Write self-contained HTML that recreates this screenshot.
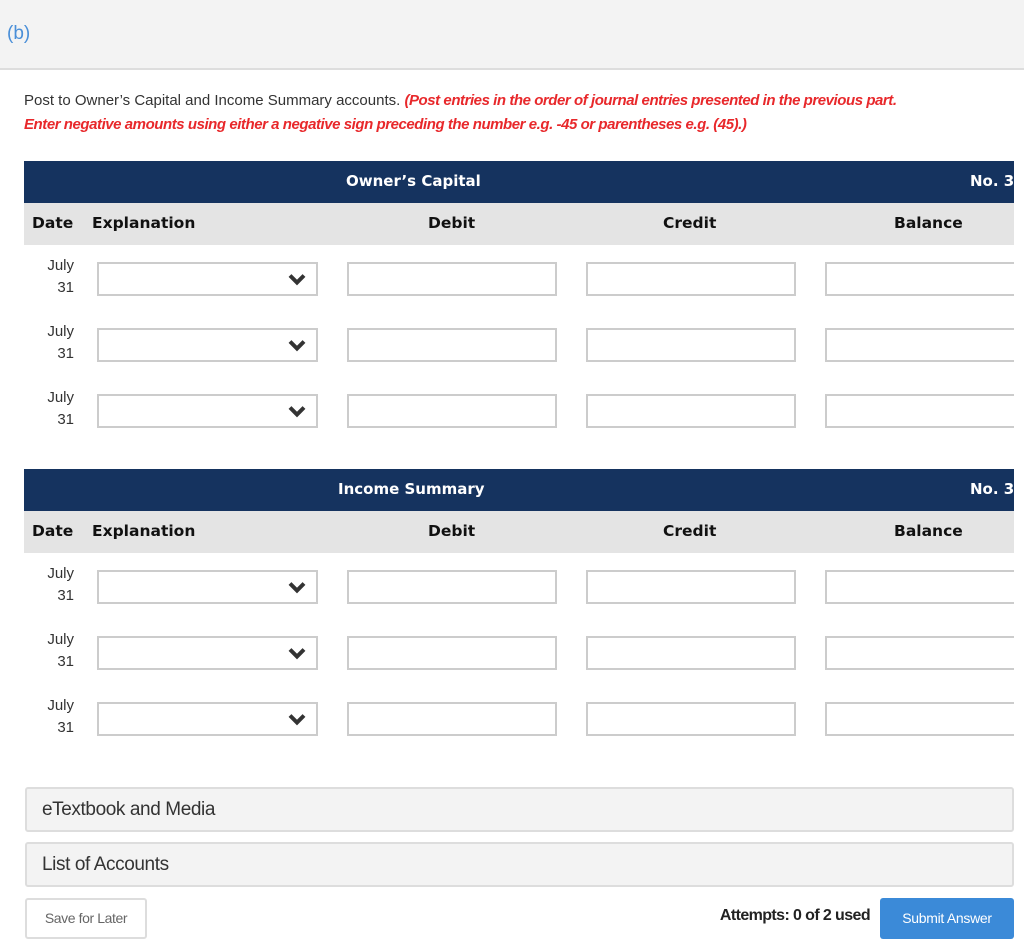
<!DOCTYPE html>
<html><head><style>
*{box-sizing:border-box;margin:0;padding:0}
body{width:1024px;height:944px;background:#fff;font-family:"Liberation Sans",sans-serif;position:relative;overflow:hidden;color:#333}
.top{position:absolute;left:0;top:0;width:1024px;height:70px;background:#f3f3f3;border-bottom:2px solid #ddd}
.b{position:absolute;left:7px;top:23px;color:#4a8fd8;font-size:19px}
.ins{position:absolute;left:24px;top:89px;font-size:15px;line-height:24px;color:#333;width:1000px;white-space:nowrap}
.ins i{color:#e8282b;font-weight:bold;letter-spacing:-0.45px;font-size:15px}
.hd{position:absolute;left:24px;width:990px;height:42px;background:#15335f;color:#fff;font-family:"DejaVu Sans",sans-serif;font-weight:bold;font-size:15px;overflow:hidden;white-space:nowrap}
.hd span{position:absolute;top:11px}
.ch{position:absolute;left:24px;width:990px;height:42px;background:#e4e4e4;font-family:"DejaVu Sans",sans-serif;font-weight:bold;font-size:15.5px;color:#111}
.ch span{position:absolute;top:11px}
.dt{position:absolute;left:24px;width:50px;text-align:right;font-size:15px;line-height:22px;color:#333}
.in{position:absolute;height:34px;border:2px solid #ccc;background:#fff}
.sel svg{position:absolute;right:10px;top:9px}
.box{position:absolute;left:25px;width:989px;height:45px;background:#f3f3f3;border:2px solid #ddd;border-radius:3px;font-size:19px;color:#333;padding:10px 0 0 15px;letter-spacing:-0.4px}
.save{position:absolute;left:25px;top:898px;width:122px;height:41px;border:2px solid #ddd;border-radius:3px;font-size:14px;color:#666;text-align:center;line-height:37px;letter-spacing:-0.4px}
.att{position:absolute;right:154px;top:907px;font-size:16px;color:#222;font-weight:bold;letter-spacing:-0.6px}
.sub{position:absolute;left:880px;top:898px;width:134px;height:41px;background:#3b8ad8;border-radius:3px;color:#fff;font-size:14px;text-align:center;line-height:41px;letter-spacing:-0.3px}
</style></head><body>
<div class="top"><div class="b">(b)</div></div>
<div class="ins">Post to Owner’s Capital and Income Summary accounts. <i>(Post entries in the order of journal entries presented in the previous part.</i><br><i>Enter negative amounts using either a negative sign preceding the number e.g. -45 or parentheses e.g. (45).)</i></div>

<div class="hd" style="top:161px"><span style="left:322px">Owner’s Capital</span><span style="left:946px">No. 3</span></div>
<div class="ch" style="top:203px"><span style="left:8px">Date</span><span style="left:68px">Explanation</span><span style="left:404px">Debit</span><span style="left:639px">Credit</span><span style="left:870px">Balance</span></div>

<div class="hd" style="top:469px"><span style="left:314px">Income Summary</span><span style="left:946px">No. 3</span></div>
<div class="ch" style="top:511px"><span style="left:8px">Date</span><span style="left:68px">Explanation</span><span style="left:404px">Debit</span><span style="left:639px">Credit</span><span style="left:870px">Balance</span></div>

<div id="rows"></div>
<script>
var tops=[262,328,394,570,636,702],h='';
tops.forEach(function(t){
h+='<div class="dt" style="top:'+(t-7)+'px">July<br>31</div>';
h+='<div class="in sel" style="left:97px;top:'+t+'px;width:221px"><svg width="18" height="13" viewBox="0 0 18 13"><path d="M2 2.5 L9 9.5 L16 2.5" stroke="#333" stroke-width="4" fill="none"/></svg></div>';
h+='<div class="in" style="left:347px;top:'+t+'px;width:210px"></div>';
h+='<div class="in" style="left:586px;top:'+t+'px;width:210px"></div>';
h+='<div class="in" style="left:825px;top:'+t+'px;width:189px;border-right:none"></div>';
});
document.getElementById('rows').innerHTML=h;
</script>

<div class="box" style="top:787px">eTextbook and Media</div>
<div class="box" style="top:842px">List of Accounts</div>
<div class="save">Save for Later</div>
<div class="att">Attempts: 0 of 2 used</div>
<div class="sub">Submit Answer</div>
</body></html>
